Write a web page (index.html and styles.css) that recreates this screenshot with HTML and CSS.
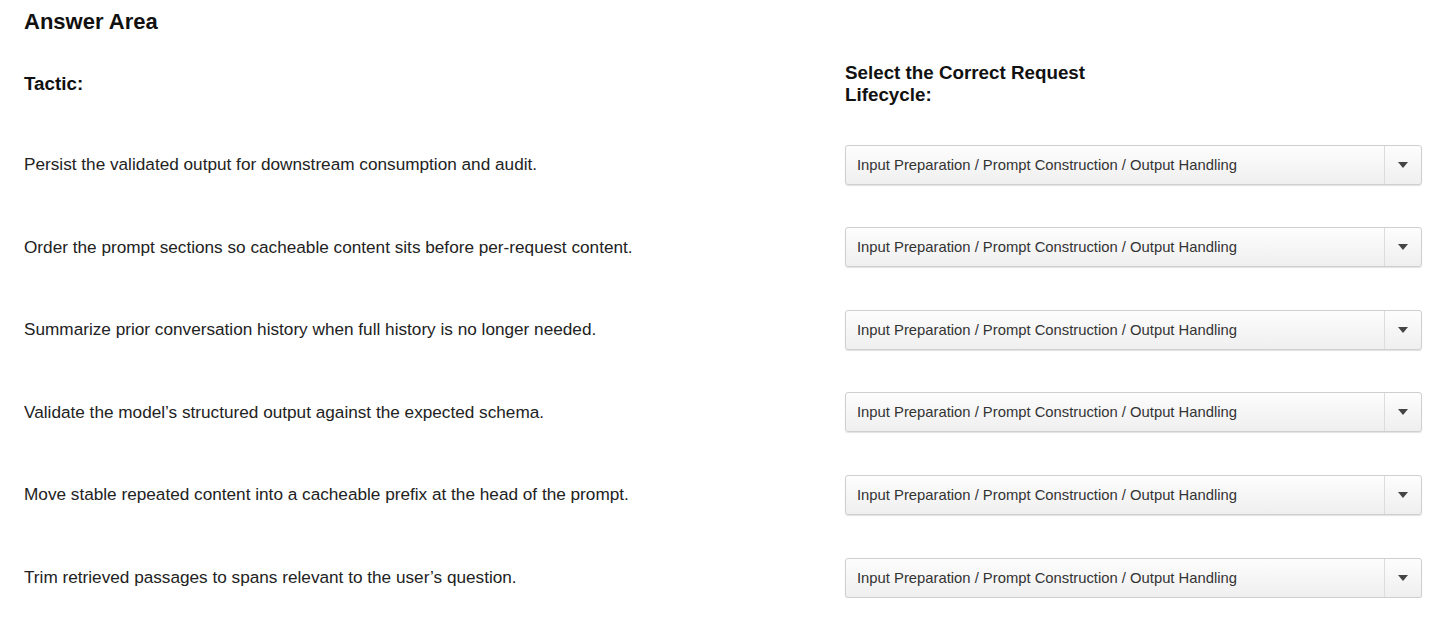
FILE: index.html
```html
<!DOCTYPE html>
<html lang="en">
<head>
    <meta charset="UTF-8">
    <title>Answer Area</title>
    <link rel="stylesheet" href="styles.css">
</head>
<body>
    <div class="answer-area">
        <h1>Answer Area</h1>
        <div class="grid">
            <div class="col-head">Tactic:</div>
            <div class="col-head col-head-right">Select the Correct Request Lifecycle:</div>

            <div class="tactic">Persist the validated output for downstream consumption and audit.</div>
            <div class="dropdown"><span class="value">Input Preparation / Prompt Construction / Output Handling</span><span class="caret"></span></div>

            <div class="tactic">Order the prompt sections so cacheable content sits before per-request content.</div>
            <div class="dropdown"><span class="value">Input Preparation / Prompt Construction / Output Handling</span><span class="caret"></span></div>

            <div class="tactic">Summarize prior conversation history when full history is no longer needed.</div>
            <div class="dropdown"><span class="value">Input Preparation / Prompt Construction / Output Handling</span><span class="caret"></span></div>

            <div class="tactic">Validate the model&rsquo;s structured output against the expected schema.</div>
            <div class="dropdown"><span class="value">Input Preparation / Prompt Construction / Output Handling</span><span class="caret"></span></div>

            <div class="tactic">Move stable repeated content into a cacheable prefix at the head of the prompt.</div>
            <div class="dropdown"><span class="value">Input Preparation / Prompt Construction / Output Handling</span><span class="caret"></span></div>

            <div class="tactic">Trim retrieved passages to spans relevant to the user&rsquo;s question.</div>
            <div class="dropdown"><span class="value">Input Preparation / Prompt Construction / Output Handling</span><span class="caret"></span></div>
        </div>
    </div>
</body>
</html>
```

FILE: styles.css
```css
body {
    margin: 0;
    font-family: "Liberation Sans", Arial, sans-serif;
    color: #222;
    background: #fff;
}
.answer-area {
    padding: 9px 24px 0 24px;
}
.answer-area h1 {
    margin: 0;
    font-size: 22px;
    line-height: 26px;
    font-weight: bold;
    color: #111;
}
.grid {
    display: grid;
    grid-template-columns: 821px 577px;
    grid-auto-rows: 40px;
    row-gap: 42.6px;
    align-items: center;
    margin-top: 27px;
}
.col-head {
    margin-top: 4px;
    font-size: 18.8px;
    font-weight: bold;
    line-height: 22px;
    color: #111;
}
.col-head-right {
    width: 270px;
}
.tactic {
    font-size: 17.2px;
    color: #222;
}
.dropdown {
    height: 40px;
    box-sizing: border-box;
    display: flex;
    align-items: center;
    border: 1px solid #cfcfcf;
    border-radius: 3px;
    background: linear-gradient(#fdfdfd, #efefef);
    box-shadow: 0 1px 1px rgba(0, 0, 0, 0.12);
}
.dropdown .value {
    flex: 1;
    padding-left: 11px;
    font-size: 14.8px;
    color: #333;
}
.dropdown .caret {
    width: 36px;
    height: 100%;
    border-left: 1px solid #dcdcdc;
    position: relative;
}
.dropdown .caret::after {
    content: "";
    position: absolute;
    left: 13px;
    top: 16px;
    border-left: 5px solid transparent;
    border-right: 5px solid transparent;
    border-top: 6px solid #444;
}
```
